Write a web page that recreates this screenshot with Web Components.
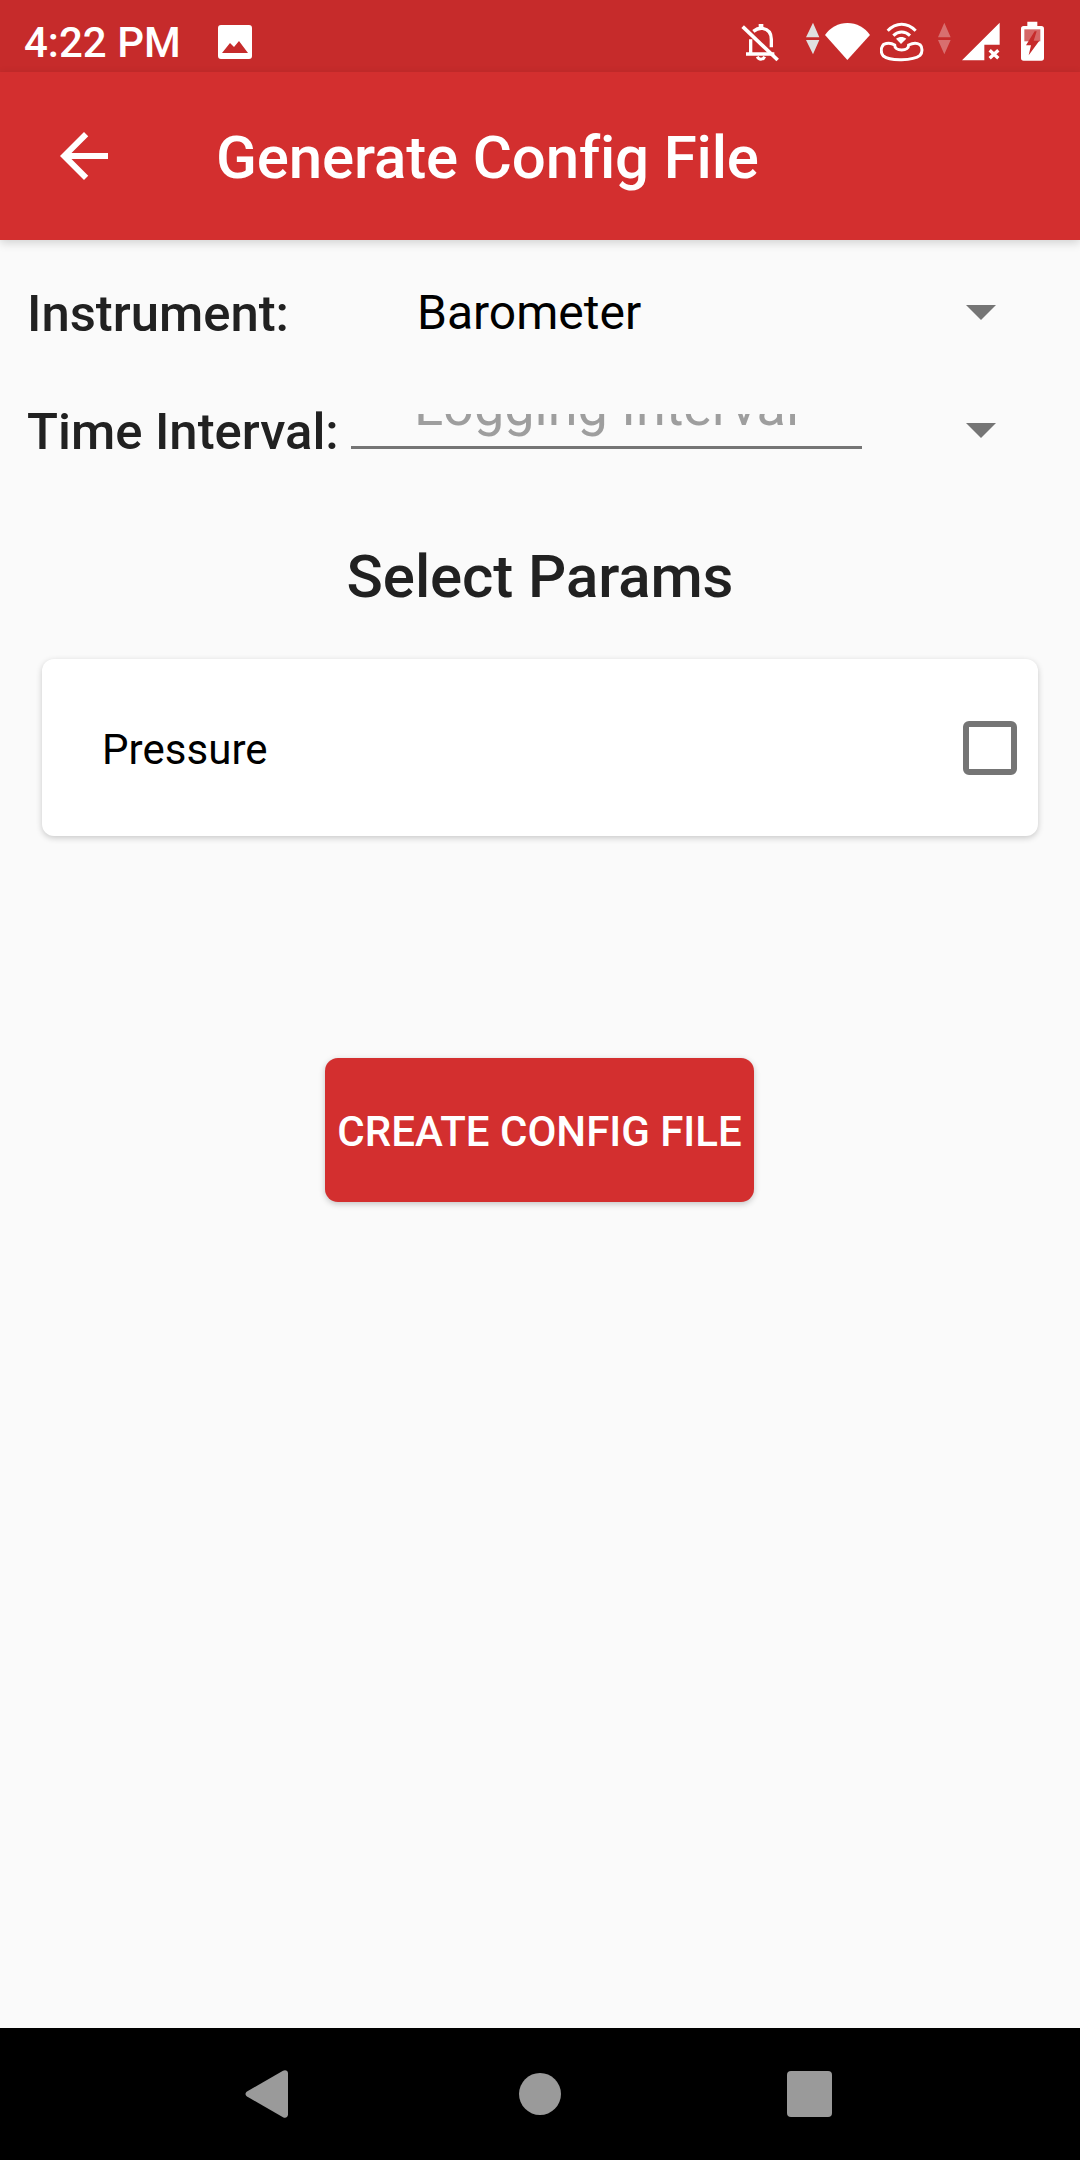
<!DOCTYPE html>
<html>
<head>
<meta charset="utf-8">
<title>Generate Config File</title>
<style>
    html, body{
        margin:0;
        padding:0;
        background:#fafafa;
    }
    body{
        font-family:Roboto, 'Liberation Sans', sans-serif;
    }
    .screen{
        display:flex;
        flex-direction:column;
        width:1080px;
        height:2160px;
        overflow:hidden;
    }
</style>
</head>
<body>
<div class="screen">
    <c-status-bar time="4:22 PM"></c-status-bar>
    <c-app-bar>Generate Config File</c-app-bar>
    <c-config-form>
        <c-form-row label="Instrument:" value="Barometer"></c-form-row>
        <c-form-row label="Time Interval:" hint="Logging Interval"></c-form-row>
        <c-section-title>Select Params</c-section-title>
        <c-param-card>Pressure</c-param-card>
        <c-raised-button>Create Config File</c-raised-button>
    </c-config-form>
    <c-nav-bar></c-nav-bar>
</div>

<script>
class CStatusBar extends HTMLElement{
    constructor(){
        super();
        this.shadow = this.attachShadow({mode:'open'});
        this.render();
    }

    render(){
        // icon viewBoxes are in 3x crop units, y always runs 60-190 so they share a top edge
        this.shadow.innerHTML = `
        <style>
        :host{
            display:flex;
            align-items:flex-start;
            height:72px;
            box-sizing:border-box;
            background:#c62b2b;
            color:#fff;
        }
        .time{
            margin-left:24px;
            width:194px;
            padding-top:7px;
            font-size:42px;
            font-weight:500;
            line-height:72px;
            white-space:nowrap;
        }
        .photo{
            margin-top:25px;
            width:34px;
            height:34px;
        }
        .icons{
            display:flex;
            margin-left:auto;
            margin-right:36px;
            padding-top:20px;
        }
        svg{
            display:block;
            flex:none;
            height:43.33px;
        }
        </style>
        <div class="time">${this.getAttribute('time')}</div>
        <svg class="photo" viewBox="0 0 34 34"><path fill="#fff" fill-rule="evenodd" d="M3 0h28a3 3 0 0 1 3 3v28a3 3 0 0 1-3 3H3a3 3 0 0 1-3-3V3a3 3 0 0 1 3-3zM4 28h26l-9-12-5 6-4-4z"/></svg>
        <div class="icons">
            <svg style="width:38px" viewBox="65 60 114 130" fill="none" stroke="#fff" stroke-width="10">
                <path stroke-width="11" d="M70 80L175 180"/>
                <path d="M80 162H165M94 160V118M102 94C112 86 122 84 130 85C148 88 156 100 156 118V142"/>
                <path stroke-width="14" d="M125 72V86"/>
                <path stroke-width="9" d="M114 170C118 180 132 180 136 170"/>
            </svg>
            <svg style="width:14px;margin-left:27px" viewBox="258 60 42 130" fill="#e0e0e0">
                <path d="M279 68L298 112H258zM258 120H298L279 163z"/>
            </svg>
            <svg style="width:45px;margin-left:5px" viewBox="315 60 135 130" fill="#fff">
                <path d="M382 180L315 105A81 81 0 0 1 450 105z"/>
            </svg>
            <svg style="width:44px;margin-left:10px" viewBox="480 60 132 130" fill="none" stroke="#fff" stroke-width="9">
                <path d="M503 92C528 66 562 66 587 92M520 107C535 92 555 92 570 107"/>
                <path stroke="none" fill="#fff" d="M528 116C538 109 550 109 559 116L543 132z"/>
                <path d="M491 133C503 128 516 130 524 135C524 144 532 150 545 150C558 150 566 144 566 135C576 130 590 128 600 134C608 142 608 158 600 166C580 182 510 184 490 168C481 158 482 142 491 133z"/>
            </svg>
            <svg style="width:14px;margin-left:14px" viewBox="657 60 42 130" fill="#fff" fill-opacity=".32">
                <path d="M676 68L695 112H657zM657 120H695L676 163z"/>
            </svg>
            <svg style="width:38px;margin-left:10px" viewBox="725 60 114 130" fill="#fff">
                <path fill-rule="evenodd" d="M725 181L838 68V181zM792 134V181H838V134z"/>
                <path stroke="#fff" stroke-width="10" d="M808 151L834 175M834 151L808 175"/>
            </svg>
            <svg style="width:23px;margin-left:21px" viewBox="903 60 69 130">
                <path fill="#fff" d="M922 65H952V78H964A8 8 0 0 1 972 86V174A8 8 0 0 1 964 182H911A8 8 0 0 1 903 174V86A8 8 0 0 1 911 78H922z"/>
                <path fill="#c62b2b" fill-opacity=".72" d="M913 88H961V124H913z"/>
                <path fill="#c62b2b" d="M944 94L918 136H933L926 166L958 122H941L950 94z"/>
            </svg>
        </div>
        `;
    }
}
customElements.define('c-status-bar', CStatusBar);

class CAppBar extends HTMLElement{
    constructor(){
        super();
        this.shadow = this.attachShadow({mode:'open'});
        this.shadow.innerHTML = `
        <style>
        :host{
            display:flex;
            align-items:center;
            position:relative;
            z-index:1;
            flex:none;
            height:168px;
            padding-left:48px;
            background:#d32f2f;
            color:#fff;
            box-shadow:0 3px 9px rgba(0,0,0,.16);
        }
        svg{
            display:block;
            width:72px;
            height:72px;
            margin-right:96px;
        }
        .title{
            padding-top:2px;
            font-size:60px;
            font-weight:500;
            letter-spacing:-0.15px;
        }
        </style>
        <svg viewBox="0 0 24 24" fill="#fff"><path d="M20 11H7.83l5.59-5.59L12 4l-8 8 8 8 1.41-1.41L7.83 13H20v-2z"/></svg>
        <div class="title"><slot></slot></div>
        `;
    }
}
customElements.define('c-app-bar', CAppBar);

class CConfigForm extends HTMLElement{
    constructor(){
        super();
        this.shadow = this.attachShadow({mode:'open'});
        this.shadow.innerHTML = `
        <style>
        :host{
            display:flex;
            flex-direction:column;
            flex:1;
            padding-top:30px;
            background:#fafafa;
        }
        </style>
        <slot></slot>
        `;
    }
}
customElements.define('c-config-form', CConfigForm);

class CFormRow extends HTMLElement{
    constructor(){
        super();
        this.shadow = this.attachShadow({mode:'open'});
        this.render();
    }

    render(){
        let hint = this.getAttribute('hint');
        let value = this.getAttribute('value');
        let field = hint
            ? `<div class="field hint"><span>${hint}</span></div>`
            : `<div class="field"><span>${value}</span></div>`;

        this.shadow.innerHTML = `
        <style>
        :host{
            display:flex;
            align-items:center;
            height:84px;
            margin-bottom:34px;
            padding-left:27px;
        }
        .label{
            flex:none;
            width:324px;
            padding-top:3px;
            font-size:50.8px;
            font-weight:500;
            color:#212121;
            white-space:nowrap;
        }
        .field{
            flex:none;
            display:flex;
            align-items:center;
            box-sizing:border-box;
            width:511px;
            padding:2px 0 0 66px;
            font-size:48px;
            line-height:48px;
            color:#000;
            white-space:nowrap;
        }
        .hint{
            align-items:flex-end;
            height:35px;
            margin-top:3px;
            padding:0 0 0 63px;
            overflow:hidden;
            font-size:54px;
            line-height:54px;
            color:#9e9e9e;
            border-bottom:3px solid #757575;
        }
        .hint span{
            margin-bottom:12px;
        }
        .arrow{
            flex:none;
            width:0;
            height:0;
            margin-left:104px;
            border-left:15px solid transparent;
            border-right:15px solid transparent;
            border-top:15px solid #757575;
        }
        </style>
        <div class="label">${this.getAttribute('label')}</div>
        ${field}
        <div class="arrow"></div>
        `;
    }
}
customElements.define('c-form-row', CFormRow);

class CSectionTitle extends HTMLElement{
    constructor(){
        super();
        this.shadow = this.attachShadow({mode:'open'});
        this.shadow.innerHTML = `
        <style>
        :host{
            display:block;
            margin-top:28px;
            height:85px;
            line-height:85px;
            margin-bottom:40px;
            text-align:center;
            font-size:60px;
            font-weight:500;
            letter-spacing:-0.1px;
            color:#212121;
        }
        </style>
        <slot></slot>
        `;
    }
}
customElements.define('c-section-title', CSectionTitle);

class CParamCard extends HTMLElement{
    constructor(){
        super();
        this.shadow = this.attachShadow({mode:'open'});
        this.shadow.innerHTML = `
        <style>
        :host{
            display:flex;
            align-items:center;
            justify-content:space-between;
            box-sizing:border-box;
            height:177px;
            margin:0 42px;
            padding:0 21px 0 60px;
            background:#fff;
            border-radius:12px;
            box-shadow:0 2px 6px rgba(0,0,0,.2);
            font-size:42px;
            color:#000;
        }
        .name{
            padding-top:3px;
            letter-spacing:0.05px;
        }
        .check{
            box-sizing:border-box;
            width:54px;
            height:54px;
            border:6px solid #757575;
            border-radius:6px;
        }
        </style>
        <div class="name"><slot></slot></div>
        <div class="check"></div>
        `;
    }
}
customElements.define('c-param-card', CParamCard);

class CRaisedButton extends HTMLElement{
    constructor(){
        super();
        this.shadow = this.attachShadow({mode:'open'});
        this.shadow.innerHTML = `
        <style>
        :host{
            display:flex;
            align-items:center;
            justify-content:center;
            align-self:center;
            box-sizing:border-box;
            width:429px;
            height:144px;
            margin:222px 1px 0 0;
            padding-top:2px;
            background:#d32f2f;
            border-radius:13px;
            box-shadow:0 2px 6px rgba(0,0,0,.22);
            color:#fff;
            font-size:42px;
            font-weight:500;
            text-transform:uppercase;
            white-space:nowrap;
        }
        </style>
        <slot></slot>
        `;
    }
}
customElements.define('c-raised-button', CRaisedButton);

class CNavBar extends HTMLElement{
    constructor(){
        super();
        this.shadow = this.attachShadow({mode:'open'});
        this.shadow.innerHTML = `
        <style>
        :host{
            display:flex;
            align-items:center;
            flex:none;
            height:132px;
            padding-left:245px;
            background:#000;
        }
        svg{
            display:block;
        }
        .home{
            width:42px;
            height:42px;
            margin-left:230px;
            border-radius:50%;
            background:#9a9a9a;
        }
        .recent{
            width:45px;
            height:46px;
            margin-left:226px;
            border-radius:4px;
            background:#9a9a9a;
        }
        </style>
        <svg width="44" height="48" viewBox="0 0 44 48"><path fill="#9a9a9a" d="M2 21.500L38 .8C40.500-.500 43 .8 43 3.500V44.500C43 47.200 40.500 48.500 38 47.200L2 26.500C0 25.200 0 22.800 2 21.500z"/></svg>
        <div class="home"></div>
        <div class="recent"></div>
        `;
    }
}
customElements.define('c-nav-bar', CNavBar);
</script>
</body>
</html>
